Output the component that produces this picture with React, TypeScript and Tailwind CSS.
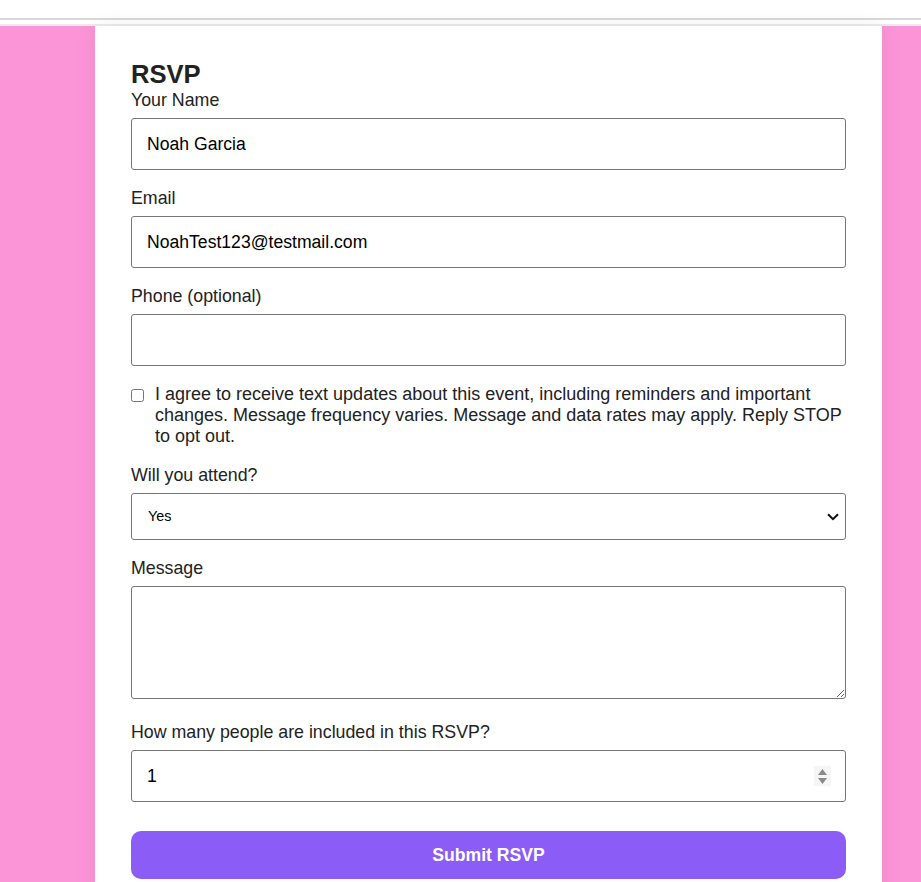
import { useState } from "react";

const labelCls = "block text-[17.8px] leading-[20px] mb-[8px] text-[#222]";
const inputCls =
	"block w-full h-[52px] border border-[#767676] rounded-[3px] bg-white px-[15px] text-[17.6px] text-black outline-none mb-[18px]";

export default function App() {
	const [name, setName] = useState("Noah Garcia");
	const [email, setEmail] = useState("NoahTest123@testmail.com");
	const [phone, setPhone] = useState("");
	const [agree, setAgree] = useState(false);
	const [attend, setAttend] = useState("yes");
	const [message, setMessage] = useState("");
	const [count, setCount] = useState("1");

	return (
		<div className="min-h-[882px] bg-[#fc95d7] font-['Liberation_Sans',Arial,sans-serif]">
			<div className="bg-white">
				<div className="h-[18px]" />
				<div className="h-[2px] bg-[#d8d8d8]" />
				<div className="h-[4px]" />
				<div className="h-[2px] bg-[#ececec]" />
			</div>

			<div className="ml-[95px] w-[787px] bg-white px-[36px] pt-[33px] pb-10 shadow-[0_0_20px_rgba(0,0,0,0.07)]">
				<h2 className="text-[25.6px] font-bold leading-[31px] text-[#222]">RSVP</h2>

				<label className={labelCls}>Your Name</label>
				<input className={inputCls} value={name} onChange={(e) => setName(e.target.value)} />

				<label className={labelCls}>Email</label>
				<input className={inputCls} type="email" value={email} onChange={(e) => setEmail(e.target.value)} />

				<label className={labelCls}>Phone (optional)</label>
				<input className={inputCls} type="tel" value={phone} onChange={(e) => setPhone(e.target.value)} />

				<label className="mb-[18px] flex items-start">
					<input
						type="checkbox"
						checked={agree}
						onChange={(e) => setAgree(e.target.checked)}
						className="mt-[5px] mr-[11px] h-[13px] w-[13px] shrink-0"
					/>
					<span className="text-[18px] leading-[21px] text-[#222]">
						I agree to receive text updates about this event, including reminders and important changes. Message
						frequency varies. Message and data rates may apply. Reply STOP to opt out.
					</span>
				</label>

				<label className={labelCls}>Will you attend?</label>
				<div className="relative mb-[18px]">
					<select
						value={attend}
						onChange={(e) => setAttend(e.target.value)}
						className="block h-[47px] w-full appearance-none rounded-[3px] border border-[#767676] bg-white pl-[16px] pr-[30px] text-[14.4px] text-black outline-none"
					>
						<option value="yes">Yes</option>
						<option value="no">No</option>
						<option value="maybe">Maybe</option>
					</select>
					<svg
						className="pointer-events-none absolute right-[7px] top-[20px]"
						width="12"
						height="8"
						viewBox="0 0 12 8"
					>
						<path d="M1 1.2l5 5 5-5" fill="none" stroke="#111" strokeWidth="2" />
					</svg>
				</div>

				<label className={labelCls}>Message</label>
				<textarea
					value={message}
					onChange={(e) => setMessage(e.target.value)}
					className="mb-[23px] block h-[113px] w-full resize-y rounded-[3px] border border-[#767676] bg-white px-[15px] py-[10px] text-[17.6px] text-black outline-none"
				/>

				<label className={labelCls}>How many people are included in this RSVP?</label>
				<div className="relative mb-[29px]">
					<input
						className="block h-[52px] w-full rounded-[3px] border border-[#767676] bg-white px-[15px] text-[17.6px] text-black outline-none"
						inputMode="numeric"
						value={count}
						onChange={(e) => setCount(e.target.value)}
					/>
					<div className="absolute right-[15px] top-[16px] flex h-[20px] w-[17px] flex-col items-center justify-center gap-[3px] bg-[#f5f5f5]">
						<svg width="9" height="6" viewBox="0 0 9 6">
							<path d="M4.5 0L9 6H0z" fill="#8a8a8a" />
						</svg>
						<svg width="9" height="6" viewBox="0 0 9 6">
							<path d="M0 0h9L4.5 6z" fill="#8a8a8a" />
						</svg>
					</div>
				</div>

				<button
					type="button"
					className="block h-[48px] w-full rounded-[10px] bg-[#8b5cf6] text-[17.6px] font-bold text-white"
				>
					Submit RSVP
				</button>
			</div>
		</div>
	);
}
